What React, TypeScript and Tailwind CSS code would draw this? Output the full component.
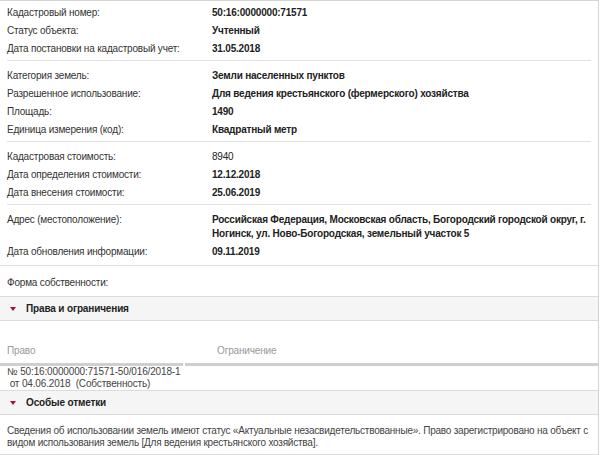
import React from "react";

type Row = { label: string; value: React.ReactNode; bold?: boolean };

const groups: Row[][] = [
  [
    { label: "Кадастровый номер:", value: "50:16:0000000:71571", bold: true },
    { label: "Статус объекта:", value: "Учтенный", bold: true },
    { label: "Дата постановки на кадастровый учет:", value: "31.05.2018", bold: true },
  ],
  [
    { label: "Категория земель:", value: "Земли населенных пунктов", bold: true },
    { label: "Разрешенное использование:", value: "Для ведения крестьянского (фермерского) хозяйства", bold: true },
    { label: "Площадь:", value: "1490", bold: true },
    { label: "Единица измерения (код):", value: "Квадратный метр", bold: true },
  ],
  [
    { label: "Кадастровая стоимость:", value: "8940" },
    { label: "Дата определения стоимости:", value: "12.12.2018", bold: true },
    { label: "Дата внесения стоимости:", value: "25.06.2019", bold: true },
  ],
  [
    {
      label: "Адрес (местоположение):",
      value: "Российская Федерация, Московская область, Богородский городской округ, г. Ногинск, ул. Ново-Богородская, земельный участок 5",
      bold: true,
    },
    { label: "Дата обновления информации:", value: "09.11.2019", bold: true },
  ],
];

function SectionHeader({ title }: { title: string }) {
  return (
    <div className="flex items-center h-[24px] bg-[#f5f5f5] border-b border-[#dcdcdc] pl-[10px]">
      <span className="w-0 h-0 border-l-[3px] border-r-[3px] border-t-[4px] border-l-transparent border-r-transparent border-t-[#a3123a] mr-[10px]" />
      <span className="text-[10px] tracking-[-0.15px] font-bold text-[#222]">{title}</span>
    </div>
  );
}

export default function App() {
  return (
    <div
      className="w-[600px] h-[455px] bg-white overflow-hidden"
      style={{ fontFamily: '"Liberation Sans", Arial, sans-serif' }}
    >
      <div className="w-[599px] border-t border-r border-[#d4d4d4] text-[10px] tracking-[-0.2px] text-[#333]">
        {groups.map((g, gi) => (
          <div
            key={gi}
            className={`border-b border-[#e0e0e0] ${gi === 0 ? "pt-[3px] pb-[2px] mx-[7px]" : gi === 3 ? "pt-[6px] pb-[4px]" : "pt-[6px] pb-[2px] mx-[7px]"}`}
          >
            {g.map((r) => (
              <div key={r.label} className={`flex py-[2px] leading-[14px] ${gi === 3 ? "px-[7px]" : ""}`}>
                <div className="w-[205px] shrink-0">{r.label}</div>
                <div className={`flex-1 pr-[4px] text-[#222] ${r.bold ? "font-bold" : ""}`}>{r.value}</div>
              </div>
            ))}
          </div>
        ))}

        <div className="pt-[10px] pb-[6px] px-[7px] leading-[14px] border-b border-[#dcdcdc]">Форма собственности:</div>

        <SectionHeader title="Права и ограничения" />

        <div className="pt-[24px] text-[10px] tracking-[-0.15px]">
          <div className="flex text-[#999] leading-[12px]">
            <div className="w-[183px] px-[7px] pb-[6px] border-b-[3px] border-[#cfcfcf] mr-[2px]">Право</div>
            <div className="flex-1 pl-[32px] pb-[6px] border-b-[3px] border-[#cfcfcf]">Ограничение</div>
          </div>
          <div className="px-[7px] leading-[12px] text-[#444] border-b border-[#dcdcdc]">
            <div>№ 50:16:0000000:71571-50/016/2018-1</div>
            <div>&nbsp;от 04.06.2018&nbsp; (Собственность)</div>
          </div>
        </div>

        <SectionHeader title="Особые отметки" />

        <div className="px-[7px] pt-[10px] pb-[5px] text-[10px] tracking-[-0.22px] leading-[12px] text-[#444] border-b border-[#dcdcdc]">
          Сведения об использовании земель имеют статус «Актуальные незасвидетельствованные». Право зарегистрировано на объект с видом использования земель [Для ведения крестьянского хозяйства].
        </div>
      </div>
    </div>
  );
}
